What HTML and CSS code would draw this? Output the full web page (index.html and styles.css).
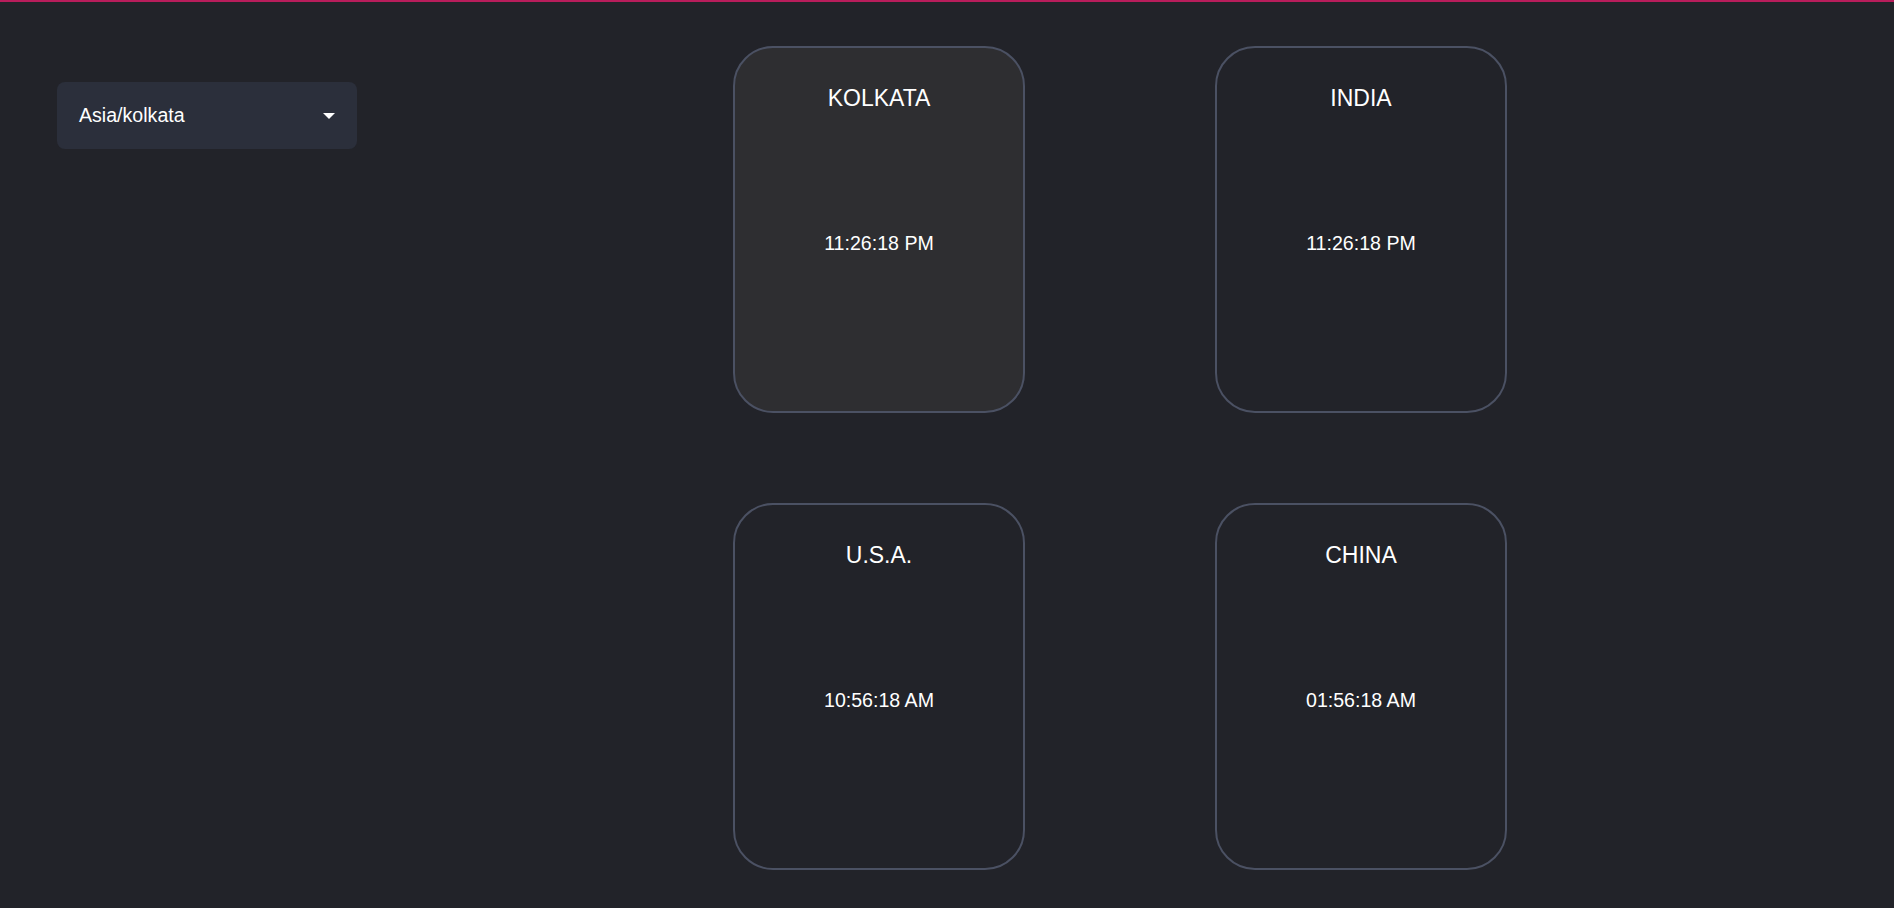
FILE: index.html
```html
<!DOCTYPE html>
<html lang="en">
<head>
<meta charset="utf-8">
<title>World Clock</title>
<link rel="stylesheet" href="styles.css">
</head>
<body>
<div class="topbar"></div>
<div class="page">
  <div class="sidebar">
    <div class="select">
      <span class="select-value">Asia/kolkata</span>
      <svg class="select-arrow" width="12" height="6" viewBox="0 0 12 6"><path d="M0 0H12L6 6Z" fill="#ffffff"/></svg>
    </div>
  </div>
  <div class="grid">
    <div class="card card-active">
      <div class="card-title">KOLKATA</div>
      <div class="card-time">11:26:18 PM</div>
    </div>
    <div class="card">
      <div class="card-title">INDIA</div>
      <div class="card-time">11:26:18 PM</div>
    </div>
    <div class="card">
      <div class="card-title">U.S.A.</div>
      <div class="card-time">10:56:18 AM</div>
    </div>
    <div class="card">
      <div class="card-title">CHINA</div>
      <div class="card-time">01:56:18 AM</div>
    </div>
  </div>
</div>
</body>
</html>
```
FILE: styles.css
```css
html, body {
  margin: 0;
  padding: 0;
}
body {
  background: #222329;
  color: #ffffff;
  font-family: "Liberation Sans", Arial, sans-serif;
  min-height: 100vh;
}
.topbar {
  height: 2px;
  background: #b91d5b;
}
.page {
  display: flex;
  align-items: flex-start;
  padding-top: 44px;
}
.sidebar {
  padding-left: 57px;
  padding-top: 36px;
}
.select {
  box-sizing: border-box;
  width: 300px;
  height: 67px;
  background: #2b2f3b;
  border-radius: 8px;
  display: flex;
  align-items: center;
  justify-content: space-between;
  padding: 0 22px;
  font-size: 19.6px;
}
.select-arrow {
  display: block;
}
.grid {
  margin-left: 376px;
  display: grid;
  grid-template-columns: 292px 292px;
  grid-auto-rows: 367px;
  column-gap: 190px;
  row-gap: 90px;
}
.card {
  box-sizing: border-box;
  border: 2px solid #4b5163;
  border-radius: 40px;
  background: #222329;
  display: flex;
  flex-direction: column;
  align-items: center;
  padding-top: 37px;
}
.card-active {
  background: #2e2e31;
}
.card-title {
  font-size: 23px;
  line-height: 26px;
}
.card-time {
  margin-top: 121px;
  font-size: 19.6px;
  line-height: 22px;
}
```
